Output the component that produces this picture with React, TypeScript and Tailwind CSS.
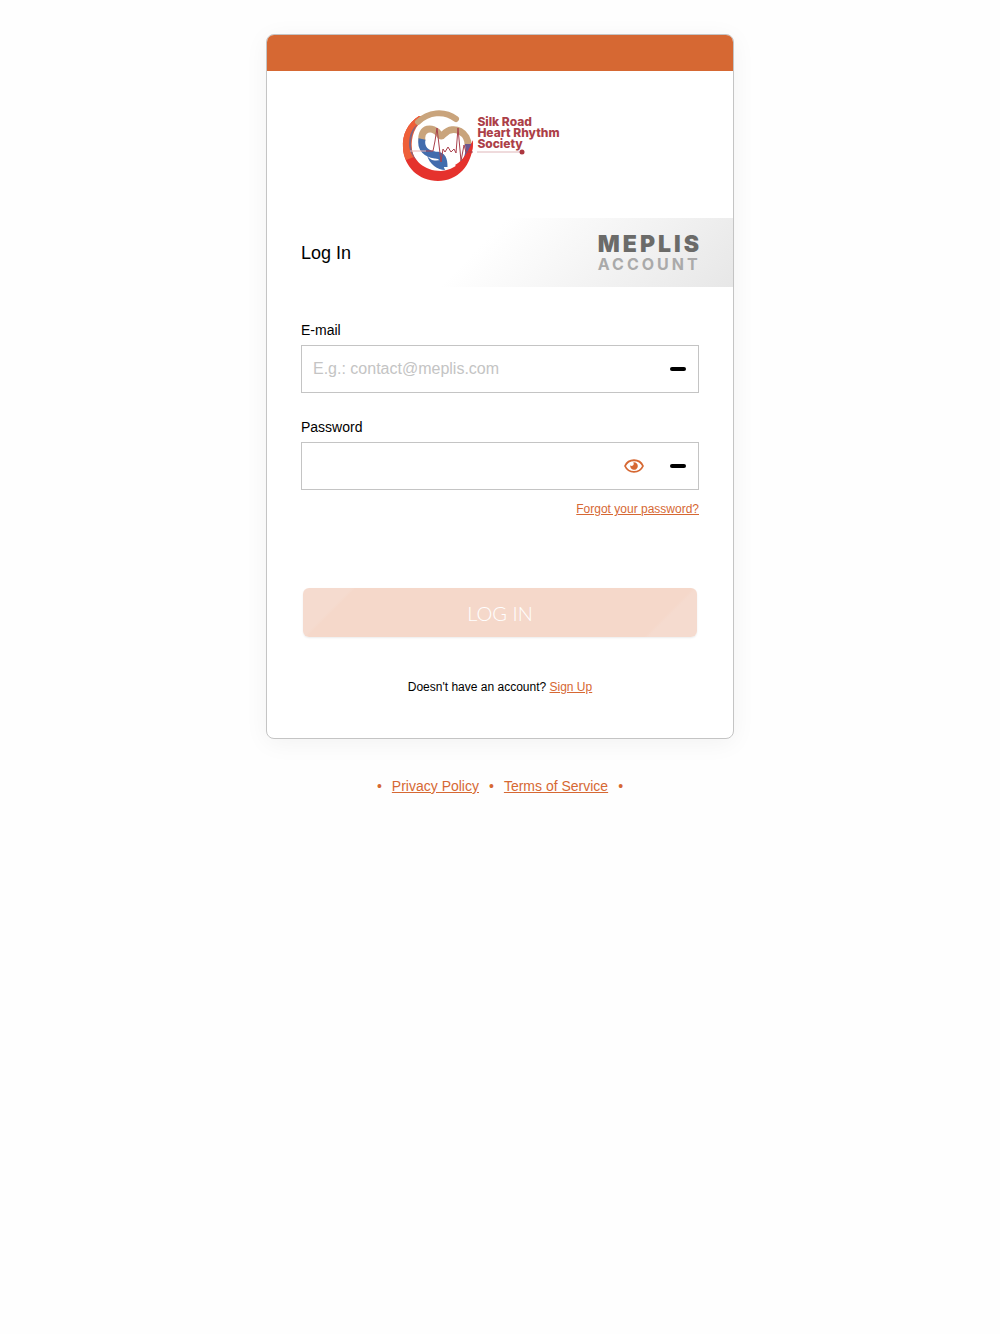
import React, { useState } from 'react';

interface FieldProps {
  id: string;
  label: string;
  type: string;
  placeholder?: string;
  children?: React.ReactNode;
}

const Field: React.FC<FieldProps> = ({ id, label, type, placeholder, children }) => (
  <div>
    <label htmlFor={id} className="block text-sm leading-5 text-black mb-[5px]">{label}</label>
    <div className="flex items-center h-12 border border-[#c4c4c4] bg-white pl-[11px] pr-3">
      <input
        id={id}
        type={type}
        placeholder={placeholder}
        className="flex-1 min-w-0 h-full text-base text-black placeholder:text-[#c4c4c4] outline-none"
      />
      {children}
      <span className="w-4 h-1 bg-black rounded-xs" />
    </div>
  </div>
);

const HeartLogo = () => (
  <svg viewBox="0 0 72 72" className="w-18 h-18 shrink-0" fill="none" aria-hidden="true">
    {/* Outer ring */}
    <path d="M17 6C6 13 0 24 1 38C2 57 17 71 36 71C55 71 71 56 71 31L67 36C63 51 53 60 39 61C22 61 11 50 9 37C8 27 11 19 17 13Z" fill="#e5322d" />
    <path d="M17 6C6 13 0 24 1 38C1 42 2 46 4 50L12 47C8 37 9 23 17 14L20 6Z" fill="#ee6039" />
    <path d="M16 14C7 25 7 40 14 50C10 46 7 40 7 34C7 25 10 18 16 14Z" fill="#7d6582" />
    <path d="M16 12C26 2 42 0 54 9" stroke="#c9a47c" strokeWidth="6" strokeLinecap="round" />
    {/* Heart */}
    <path d="M20 31C18 17 31 16 37 24Q39 28 42 24C52 14 67 23 66 36" stroke="#c9a47c" strokeWidth="7" />
    <path d="M63 34L70 34C70 41 66 47 60 53C63 46 64 40 63 34Z" fill="#6b568f" />
    <path d="M71 30C72 42 66 53 58 60L53 55C62 50 67 40 71 30Z" fill="#e5322d" />
    <path d="M20 29C18 39 25 44 33 45C41 45 42 50 42 57" stroke="#426cad" strokeWidth="7" />
    <path d="M25 45C28 51 33 51 39 50L43 60C36 60 27 54 25 45Z" fill="#426cad" />
    {/* Heartbeat trace */}
    <path d="M8 41H24" stroke="#e9b4b4" strokeWidth="1" />
    <path d="M24 41H31L33 31L35 18L39 52L41 39L43 42L46 37L49 42L52 39L54 43L56 18L59 51L62 35L64 42H71" stroke="#a9404c" strokeWidth="1" strokeLinejoin="round" />
  </svg>
);

const EyeIcon = () => (
  <svg viewBox="0 0 20 14" className="w-5 h-4" fill="none" aria-hidden="true">
    <path d="M1 7C4.500-.7 15.500-.7 19 7C15.500 14.700 4.500 14.700 1 7Z" stroke="#d66833" strokeWidth="1.800" strokeLinejoin="round" />
    <path d="M10 3.200A3.800 3.800 0 1 1 6.300 6.200A2 2 0 0 0 9.200 3.400Z" fill="#d66833" />
  </svg>
);

const App: React.FC = () => {
  const [showPassword, setShowPassword] = useState(false);

  return (
    <div className="min-h-screen bg-[#fefefe] px-4 pt-[34px] pb-8 font-['Liberation_Sans',Arial,sans-serif]">
      <main className="w-full max-w-[468px] mx-auto bg-white border border-[#c4c4c4] rounded-lg overflow-hidden shadow-[0_4px_24px_rgba(0,0,0,0.05)]">
        <div className="h-9 bg-[#d66833]" />

        {/* Society logo */}
        <div className="flex justify-center pt-[39px] pb-9 pr-[38px]">
          <div className="flex items-start">
            <HeartLogo />
            <div className="pl-[3px] pt-1.5 font-['Inter',sans-serif] text-xs leading-[11px] font-extrabold text-[#ac3f48]">
              <p>Silk Road</p>
              <p>Heart Rhythm</p>
              <p>Society</p>
              <svg viewBox="0 0 48 6" className="w-12 h-1.5" fill="none" aria-hidden="true">
                <path d="M0 3H46" stroke="#dfb6b9" />
                <circle cx="45" cy="3" r="2.500" fill="#ac3740" />
              </svg>
            </div>
          </div>
        </div>

        {/* Title bar */}
        <div className="flex items-center justify-between h-[69px] pl-[34px] pr-[31px] bg-[linear-gradient(135deg,#ffffff_45%,#e7e7e7_100%)]">
          <h1 className="text-lg text-black">Log In</h1>
          <div className="pt-0.5 font-['Inter',sans-serif] tracking-[3px]">
            <p className="text-[23px] leading-5 font-black text-[#6b6b69]">MEPLIS</p>
            <p className="text-base leading-5 font-bold text-[#aaaaaa]">ACCOUNT</p>
          </div>
        </div>

        <form className="px-[34px] pt-[33px] pb-[41px]" onSubmit={(e) => e.preventDefault()}>
          <Field id="email" label="E-mail" type="email" placeholder="E.g.: contact@meplis.com" />
          <div className="h-6" />
          <Field id="password" label="Password" type={showPassword ? 'text' : 'password'}>
            <button
              type="button"
              aria-label="Show password"
              onClick={() => setShowPassword(!showPassword)}
              className="mr-[26px]"
            >
              <EyeIcon />
            </button>
          </Field>
          <div className="mt-[9px] text-right text-xs leading-5">
            <a href="#forgot" className="text-[#d66833] underline">Forgot your password?</a>
          </div>

          <div className="px-0.5 mt-[69px]">
            <button
              type="submit"
              disabled
              className="block w-full h-[49px] rounded-md text-white text-xl font-light font-['Lato',sans-serif] bg-[linear-gradient(135deg,#f5dbcf_11%,#f5d8ca_12%,#f5d8ca_88%,#f5dbcf_89%)] shadow-[0_1px_2px_rgba(0,0,0,0.08)]"
            >
              LOG IN
            </button>
          </div>

          <p className="mt-10 text-center text-xs leading-5 text-black">
            Doesn't have an account? <a href="#signup" className="text-[#d66833] underline">Sign Up</a>
          </p>
        </form>
      </main>

      <footer className="flex items-center justify-center gap-2.5 mt-[37px] text-sm leading-5 text-[#d66833]">
        <span>•</span>
        <a href="#privacy" className="underline">Privacy Policy</a>
        <span>•</span>
        <a href="#terms" className="underline">Terms of Service</a>
        <span>•</span>
      </footer>
    </div>
  );
};

export default App;
